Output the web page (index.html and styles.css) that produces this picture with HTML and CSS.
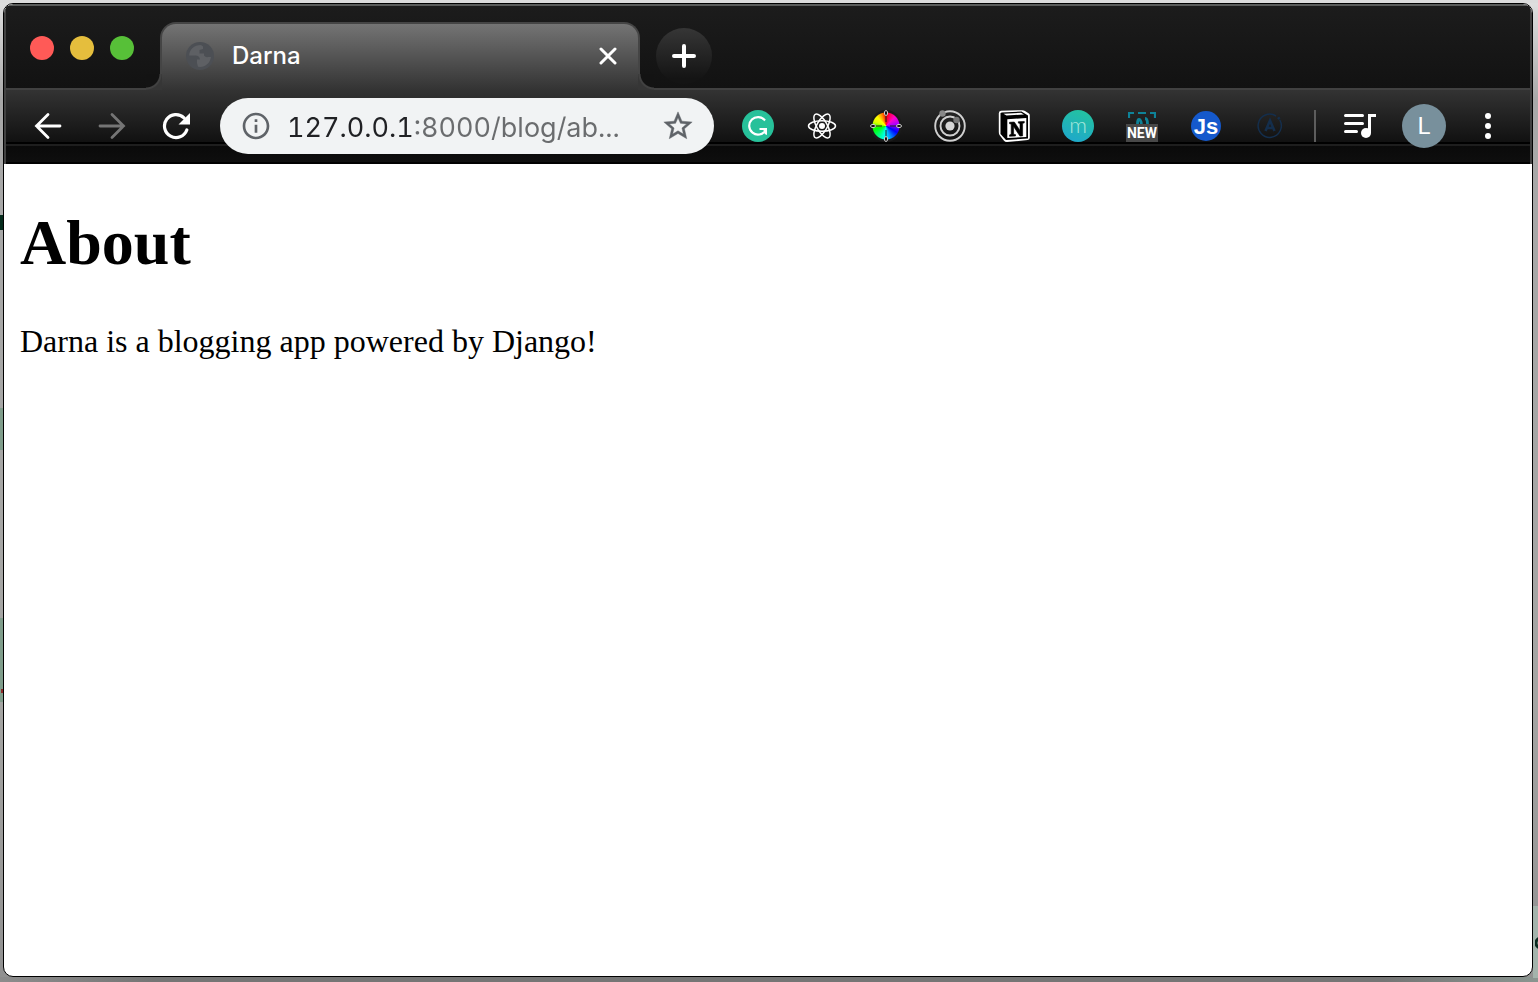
FILE: index.html
```html
<!DOCTYPE html>
<html lang="en">
<head>
<meta charset="utf-8">
<title>Darna</title>
<link rel="stylesheet" href="styles.css">
</head>
<body>
<div class="window">
  <header class="chrome">
    <div class="tab-strip">
      <div class="lights">
        <button class="light light-close" aria-label="Close window"></button>
        <button class="light light-min" aria-label="Minimize window"></button>
        <button class="light light-max" aria-label="Maximize window"></button>
      </div>
      <div class="tab">
        <svg class="favicon" viewBox="0 0 28 28" aria-hidden="true">
          <circle cx="14" cy="14" r="14" fill="#4c4f54"/>
          <path d="M15 3C8 3 3.500 7.500 3.200 13.500H9.500q4 0 4.500 4h-3v3.500l1 3.800c7 1 12-3.500 13-9.800h-3q-2 1-4-1.500v-2h-4.500V8l3.500-1V4.500z" fill="#5e6064"/>
        </svg>
        <span class="tab-title">Darna</span>
        <button class="tab-close" aria-label="Close tab">
          <svg width="18" height="18" viewBox="0 0 18 18"><path d="M2 2l14 14M16 2L2 16" stroke="#fff" stroke-width="3" stroke-linecap="round"/></svg>
        </button>
      </div>
      <button class="new-tab" aria-label="New tab">
        <svg width="24" height="24" viewBox="0 0 24 24"><path d="M12 2v20M2 12h20" stroke="#fff" stroke-width="4" stroke-linecap="round"/></svg>
      </button>
    </div>

    <div class="toolbar">
      <nav class="nav">
        <button class="tool" aria-label="Back">
          <svg width="28" height="28" viewBox="0 0 28 28" fill="none" stroke="#fff" stroke-width="2.800" stroke-linecap="round"><path d="M26 14H2.500M14 2.500L2.500 14 14 25.500"/></svg>
        </button>
        <button class="tool" aria-label="Forward">
          <svg width="28" height="28" viewBox="0 0 28 28" fill="none" stroke="#757575" stroke-width="2.800" stroke-linecap="round"><path d="M2 14h23.500M14 2.500L25.500 14 14 25.500"/></svg>
        </button>
        <button class="tool" aria-label="Reload">
          <svg width="28" height="28" viewBox="0 0 28 28"><path d="M24.800 18A11.500 11.500 0 1 1 22 5.800" fill="none" stroke="#fff" stroke-width="3.200" stroke-linecap="round"/><path d="M28 1v11.500H16.500z" fill="#fff"/></svg>
        </button>
      </nav>

      <div class="address">
        <button class="inline-icon" aria-label="Site information">
          <svg width="32" height="32" viewBox="0 0 24 24" fill="#5f6368"><path d="M11 7h2v2h-2zm0 4h2v6h-2zm1-9C6.480 2 2 6.480 2 12s4.480 10 10 10 10-4.480 10-10S17.520 2 12 2zm0 18c-4.410 0-8-3.590-8-8s3.590-8 8-8 8 3.590 8 8-3.590 8-8 8z"/></svg>
        </button>
        <input class="url" type="text" aria-label="Address" value="127.0.0.1:8000/blog/ab...">
        <button class="inline-icon" aria-label="Bookmark this page">
          <svg width="34" height="34" viewBox="0 0 24 24" fill="#5f6368" stroke="#5f6368" stroke-width=".3"><path d="M22 9.240l-7.190-.62L12 2 9.190 8.630 2 9.240l5.460 4.730L5.820 21 12 17.270 18.180 21l-1.630-7.030L22 9.240zM12 15.400l-3.760 2.270 1-4.280-3.320-2.880 4.380-.38L12 6.100l1.710 4.040 4.380.38-3.320 2.880 1 4.280L12 15.400z"/></svg>
        </button>
      </div>

      <div class="extensions">
        <button class="tool" aria-label="Grammarly">
          <svg width="32" height="32" viewBox="0 0 32 32"><circle cx="16" cy="16" r="16" fill="#27c19a"/><path d="M23 10.500A8.800 8.800 0 1 0 23.500 20.500M17.500 19h6" fill="none" stroke="#fff" stroke-width="2.200"/><path d="M18 18h7v7l-2.300-1-1-3.500z" fill="#fff"/></svg>
        </button>
        <button class="tool" aria-label="React Developer Tools">
          <svg width="32" height="32" viewBox="0 0 32 32"><g fill="none" stroke="#fff" stroke-width="1.500"><ellipse cx="16" cy="16" rx="13.500" ry="5.200"/><ellipse cx="16" cy="16" rx="13.500" ry="5.200" transform="rotate(60 16 16)"/><ellipse cx="16" cy="16" rx="13.500" ry="5.200" transform="rotate(120 16 16)"/></g><circle cx="16" cy="16" r="3" fill="#fff"/></svg>
        </button>
        <button class="tool" aria-label="Color picker">
          <span class="wheel">
            <svg width="32" height="32" viewBox="0 0 32 32"><path d="M16 5v7M16 20v7M5 16h7M20 16h7" stroke="#222" stroke-opacity=".7" stroke-width="1.500"/><g fill="#111" stroke="#ccc" stroke-width="1"><ellipse cx="16" cy="3" rx="1.600" ry="2.500"/><ellipse cx="16" cy="29" rx="1.600" ry="2.500"/><ellipse cx="3" cy="16" rx="2.500" ry="1.600"/><ellipse cx="29" cy="16" rx="2.500" ry="1.600"/></g></svg>
          </span>
        </button>
        <button class="tool" aria-label="Orbit">
          <svg width="32" height="32" viewBox="0 0 32 32"><g fill="none" stroke="#cfcfcf" stroke-width="1.900"><circle cx="16" cy="16" r="14.800"/><circle cx="16" cy="16" r="9.500"/></g><circle cx="16" cy="16" r="4.600" fill="#d5d5d5"/><circle cx="8.500" cy="3.500" r="3.200" fill="#888"/><circle cx="22.500" cy="10" r="3.200" fill="#777"/></svg>
        </button>
        <button class="tool" aria-label="Notion">
          <svg width="32" height="32" viewBox="0 0 32 32"><path d="M3 .8L24 .2q2 0 3 .8l3.500 2.200q1.300.6 1.300 2v22.500q0 2-2 2.400L9 32q-2 0-3.200-1.500L1.500 25Q.8 24 .8 22V3.200Q.8 1 3 .8z" fill="#fff"/><path d="M3.500 2.500L23.500 1.500 30 5.500V28.500L8 30 2.500 24V3.500z" fill="#000"/><path d="M5.500 3.800l17.500-1 3 1.700-17.500 1z" fill="#fff"/><path d="M9.300 9.300l19-1.200v18.800l-19 1.200z" fill="#fff"/><path d="M11.500 12.300l4.800-.3 5.700 8.500v-7l-1.700-.4v-1.400l6-.3v1.400l-1.700.6v12.500l-2.700.2-6.300-9.500v7.600l1.900.4v1.400l-6 .3v-1.400l1.700-.6V14l-1.700-.3z" fill="#000" stroke="#000" stroke-width=".6"/></svg>
        </button>
        <button class="tool" aria-label="Momentum"><span class="badge-m">m</span></button>
        <button class="tool" aria-label="Screen capture, new">
          <span class="capture">
            <svg width="28" height="12" viewBox="0 0 28 12" fill="none" stroke="#0e8298" stroke-width="2.200"><path d="M1 6V1h5M10 1h8M22 1h5v5"/><path d="M9.500 12c0-3 .5-4.500 1.500-4.500S13 9 13.500 12M17 6.500c2 0 2.500 3 2.500 5.500" stroke-width="2.800"/></svg>
            <span class="capture-new">NEW</span>
          </span>
        </button>
        <button class="tool" aria-label="JavaScript switch"><span class="badge-js">Js</span></button>
        <button class="tool" aria-label="Apollo">
          <svg width="32" height="32" viewBox="0 0 32 32" fill="none" stroke="#142e4c"><path d="M25.800 10A11.600 11.600 0 1 1 22 6" stroke-width="1.500"/><circle cx="24.800" cy="8.300" r="1" fill="#142e4c"/><path d="M11.500 21L16 10.500 20.500 21M13.500 18H18" stroke-width="2.600"/></svg>
        </button>
      </div>

      <div class="separator"></div>
      <div class="menu">
        <button class="tool" aria-label="Media controls">
          <svg width="32" height="26" viewBox="0 0 32 26"><path d="M1.500 2.500h17M1.500 10.500h17M1.500 18.500h11" stroke="#fff" stroke-width="3" stroke-linecap="round"/><path d="M32 1v3h-5v16h-3V1z" fill="#fff"/><circle cx="22" cy="20" r="5" fill="#fff"/></svg>
        </button>
        <button class="tool" aria-label="Profile"><span class="avatar">L</span></button>
        <button class="tool" aria-label="Menu">
          <svg width="6" height="26" viewBox="0 0 6 26" fill="#fff"><circle cx="3" cy="3" r="3"/><circle cx="3" cy="13" r="3"/><circle cx="3" cy="23" r="3"/></svg>
        </button>
      </div>
    </div>
  </header>

  <main class="page">
    <h1 class="heading">About</h1>
    <p class="text">Darna is a blogging app powered by Django!</p>
  </main>
</div>
</body>
</html>
```

FILE: styles.css
```css
* { box-sizing: border-box; }

body {
  margin: 0;
  min-height: 100vh;
  padding: 3px 5px 5px 3px;
  display: flex;
  background:
    linear-gradient(#052b1c, #052b1c) 0 215px / 3px 15px no-repeat,
    linear-gradient(#7f9d8b, #7f9d8b) 0 408px / 3px 42px no-repeat,
    linear-gradient(#8f2a28, #8f2a28) 1px 689px / 2px 4px no-repeat,
    linear-gradient(#7f9d8b, #7f9d8b) 0 618px / 3px 84px no-repeat,
    radial-gradient(circle at 6px 7px, #a3b3ab 3px, #0a2a1f 4px, #0a2a1f 6px, transparent 7px) 100% 936px / 3px 14px no-repeat,
    linear-gradient(#a3b3ab, #a3b3ab) 100% 906px / 5px 72px no-repeat,
    linear-gradient(90deg, #8c8c8c, #757575 10%, #757575 90%, #8a9590) 0 100% / 100% 5px no-repeat,
    linear-gradient(#dcdcdc, #dcdcdc) 0 0 / 100% 3px no-repeat,
    linear-gradient(#e0e0e0, #a8a8a8 100px, #a5a5a3 700px, #909090);
  font-family: Inter, "Liberation Sans", sans-serif;
}

button {
  margin: 0;
  padding: 0;
  border: 0;
  background: none;
  color: inherit;
  font: inherit;
}

svg { display: block; }

.window {
  flex: 1;
  min-width: 0;
  display: flex;
  flex-direction: column;
  border: 1px solid #000;
  border-radius: 10px;
  overflow: hidden;
  background: #fff;
}

.chrome {
  border: 2px solid #414141;
  border-top-color: #5a5c5b;
  border-bottom: 0;
  border-radius: 9px 9px 0 0;
  background: #161616;
}

.tab-strip {
  display: flex;
  height: 84px;
  padding-left: 24px;
  background: linear-gradient(#1c1c1c, #121212 82px, #414141 82px);
}

.lights {
  display: flex;
  gap: 16px;
  padding-top: 30px;
  margin-right: 26px;
}

.light { width: 24px; height: 24px; border-radius: 50%; }
.light-close { background: #ff5a57; }
.light-min { background: #e5be3d; }
.light-max { background: #57c038; }

.tab {
  position: relative;
  flex: 0 1 480px;
  display: flex;
  align-items: center;
  gap: 18px;
  margin-top: 16px;
  padding: 0 21px 2px 24px;
  border: 2px solid #454545;
  border-bottom: 0;
  border-radius: 16px 16px 0 0;
  background: linear-gradient(#747474, #333);
}

.tab::before,
.tab::after {
  content: "";
  position: absolute;
  bottom: 0;
  width: 16px;
  height: 16px;
}

.tab::before {
  left: -16px;
  background: radial-gradient(circle at 0 0, #131313 13px, #414141 14px, #414141 15px, #363636 16px);
}

.tab::after {
  right: -16px;
  background: radial-gradient(circle at 100% 0, #131313 13px, #414141 14px, #414141 15px, #363636 16px);
}

.favicon { width: 28px; height: 28px; }

.tab-title {
  flex: 1;
  color: #fff;
  font-size: 24px;
  font-weight: 500;
  line-height: 28px;
}

.new-tab {
  display: grid;
  place-items: center;
  width: 56px;
  height: 56px;
  margin: 22px 0 0 16px;
  border-radius: 50%;
  background: linear-gradient(#363636, #141414 90%);
}

.toolbar {
  display: flex;
  align-items: center;
  height: 74px;
  padding: 8px 10px;
  border-bottom: 2px solid #000;
  background: linear-gradient(#333, #111 52px, #000 52px, #000 54px, #1e1e1e 54px, #1e1e1e 56px, #0a0a0a 56px, #0e0e0e);
}

.nav, .extensions, .menu { display: flex; }

.tool {
  display: grid;
  place-items: center;
  width: 64px;
  height: 56px;
}

.address {
  flex: 1;
  min-width: 0;
  display: flex;
  align-items: center;
  height: 56px;
  margin: 0 12px;
  padding: 0 19px 0 20px;
  border-radius: 28px;
  background: #f1f3f4;
}

.url {
  flex: 1;
  min-width: 0;
  height: 42px;
  margin: 0 8px 0 15px;
  padding: 2px 0 0;
  border: 0;
  outline: 0;
  font: 27px Inter, "Liberation Sans", sans-serif;
  font-variant-numeric: tabular-nums;
  color: transparent;
  background: linear-gradient(90deg, #202124 125px, #6a6c6e 125px);
  -webkit-background-clip: text;
  background-clip: text;
}

.wheel {
  width: 32px;
  height: 32px;
  background: radial-gradient(circle, transparent 13px, #1b1b1b 14px), conic-gradient(#f00, #f0c 45deg, #a0f 80deg, #00f 120deg, #08f 155deg, #0ff 185deg, #0f8 215deg, #0f0 255deg, #df0 290deg, #ff0 315deg, #f80 340deg, #f00);
  border-radius: 50%;
}

.badge-m {
  width: 32px;
  height: 32px;
  border-radius: 50%;
  background: linear-gradient(200deg, #24c59c, #1ea5cf);
  color: #a5e6dc;
  font: 300 22px/30px Lato, sans-serif;
}

.capture {
  display: grid;
  justify-items: center;
  padding-top: 2px;
}

.capture-new {
  width: 32px;
  height: 18px;
  background: #484848;
  color: #fff;
  font: 700 14px/18px Roboto, sans-serif;
}

.badge-js {
  width: 30px;
  height: 30px;
  border-radius: 50%;
  background: #1559cc;
  color: #fff;
  font: 700 22px/32px "Liberation Sans", sans-serif;
}

.separator {
  width: 2px;
  height: 32px;
  margin: 0 12px;
  background: #5d5d5d;
}

.avatar {
  width: 44px;
  height: 44px;
  border-radius: 50%;
  background: #78909c;
  color: #fff;
  font: 24px/44px Roboto, sans-serif;
}

.page {
  flex: 1;
  padding: 42px 16px;
  color: #000;
  font-family: "Liberation Serif", serif;
}

.heading { margin: 0 0 43px; font-size: 64px; line-height: 74px; }
.text { margin: 0; font-size: 32px; line-height: 37px; }
```
